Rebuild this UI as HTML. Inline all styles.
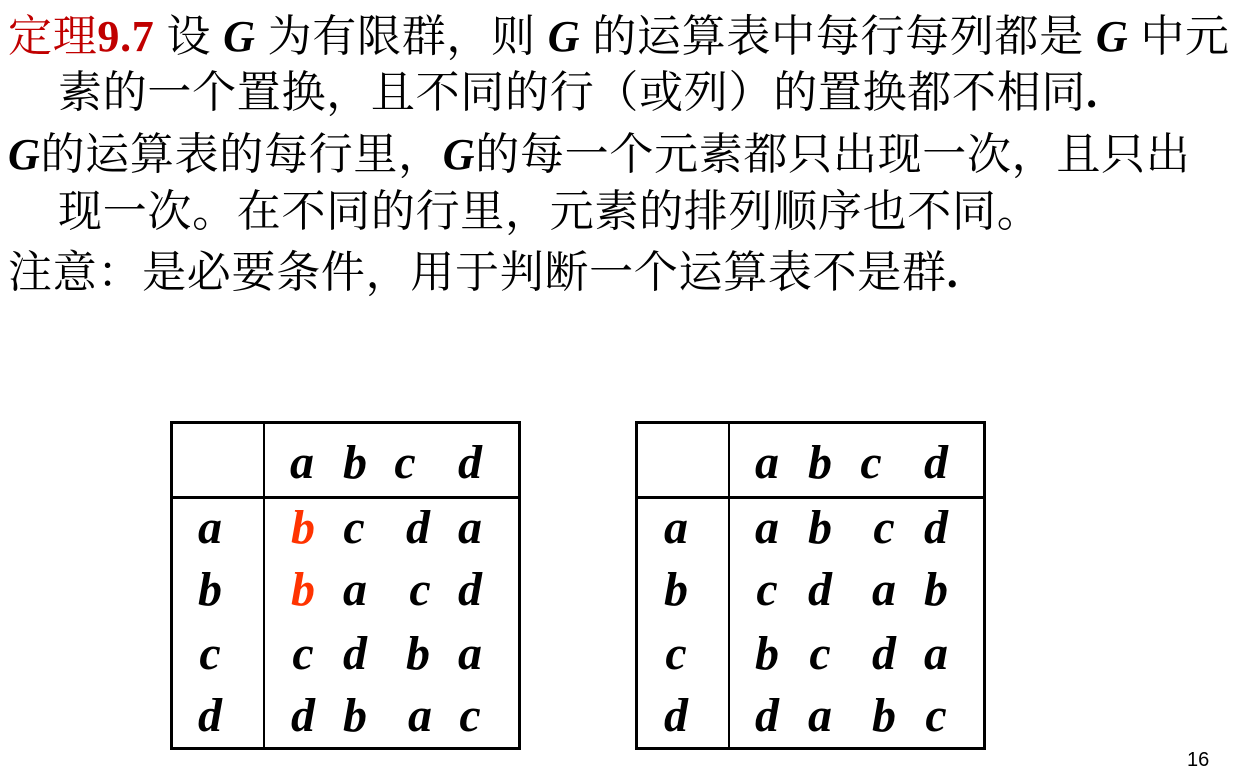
<!DOCTYPE html>
<html><head><meta charset="utf-8"><style>
body{margin:0;width:1260px;height:771px;background:#fff;position:relative;overflow:hidden;font-family:"Noto Serif CJK SC",serif;}
.l{position:absolute;left:8px;font-size:44px;line-height:44px;letter-spacing:0.7px;white-space:nowrap;color:#000;font-family:"Noto Serif CJK SC",serif;}
.i{font-weight:bold;font-style:italic;font-family:"Liberation Serif",serif;}
.n{font-family:"Liberation Serif",serif;font-weight:bold}
.r{color:#c00000}
.box{position:absolute;border:3px solid #000;box-sizing:border-box;}
.v{position:absolute;background:#000;}
.c{position:absolute;font:bold italic 48px "Liberation Serif",serif;transform:translate(-50%,-50%);line-height:1;}
.o{color:#ff3300}
</style></head><body>
<div class="l" style="top:10px"><span class="r">定理<span class="n">9.7</span></span> 设 <span class="i">G</span> 为有限群，则 <span class="i">G</span> 的运算表中每行每列都是 <span class="i">G</span> 中元</div>
<div class="l" style="top:66px;left:58px">素的一个置换，且不同的行（或列）的置换都不相同<span class="n">.</span></div>
<div class="l" style="top:128px"><span class="i">G</span>的运算表的每行里，<span class="i">G</span>的每一个元素都只出现一次，且只出</div>
<div class="l" style="top:185px;left:58px">现一次。在不同的行里，元素的排列顺序也不同。</div>
<div class="l" style="top:246px">注意：是必要条件，用于判断一个运算表不是群<span class="n">.</span></div>

<div class="box" style="left:170px;top:421px;width:351px;height:329px"></div>
<div class="v" style="left:263px;top:421px;width:2px;height:329px"></div>
<div class="v" style="left:170px;top:496px;width:351px;height:3px"></div>
<div class="box" style="left:635px;top:421px;width:351px;height:329px"></div>
<div class="v" style="left:728px;top:421px;width:2px;height:329px"></div>
<div class="v" style="left:635px;top:496px;width:351px;height:3px"></div>

<span class="c" style="left:302px;top:463px">a</span><span class="c" style="left:355px;top:463px">b</span><span class="c" style="left:405px;top:463px">c</span><span class="c" style="left:470px;top:463px">d</span>
<span class="c" style="left:210px;top:528px">a</span><span class="c" style="left:210px;top:590px">b</span><span class="c" style="left:210px;top:654px">c</span><span class="c" style="left:210px;top:716px">d</span>
<span class="c o" style="left:303px;top:528px">b</span><span class="c" style="left:354px;top:528px">c</span><span class="c" style="left:418px;top:528px">d</span><span class="c" style="left:470px;top:528px">a</span>
<span class="c o" style="left:303px;top:590px">b</span><span class="c" style="left:355px;top:590px">a</span><span class="c" style="left:420px;top:590px">c</span><span class="c" style="left:470px;top:590px">d</span>
<span class="c" style="left:303px;top:654px">c</span><span class="c" style="left:355px;top:654px">d</span><span class="c" style="left:418px;top:654px">b</span><span class="c" style="left:470px;top:654px">a</span>
<span class="c" style="left:303px;top:716px">d</span><span class="c" style="left:355px;top:716px">b</span><span class="c" style="left:420px;top:716px">a</span><span class="c" style="left:470px;top:716px">c</span>

<span class="c" style="left:767px;top:463px">a</span><span class="c" style="left:820px;top:463px">b</span><span class="c" style="left:871px;top:463px">c</span><span class="c" style="left:936px;top:463px">d</span>
<span class="c" style="left:676px;top:528px">a</span><span class="c" style="left:676px;top:590px">b</span><span class="c" style="left:676px;top:654px">c</span><span class="c" style="left:676px;top:716px">d</span>
<span class="c" style="left:767px;top:528px">a</span><span class="c" style="left:820px;top:528px">b</span><span class="c" style="left:884px;top:528px">c</span><span class="c" style="left:936px;top:528px">d</span>
<span class="c" style="left:767px;top:590px">c</span><span class="c" style="left:820px;top:590px">d</span><span class="c" style="left:884px;top:590px">a</span><span class="c" style="left:936px;top:590px">b</span>
<span class="c" style="left:767px;top:654px">b</span><span class="c" style="left:820px;top:654px">c</span><span class="c" style="left:884px;top:654px">d</span><span class="c" style="left:936px;top:654px">a</span>
<span class="c" style="left:767px;top:716px">d</span><span class="c" style="left:820px;top:716px">a</span><span class="c" style="left:884px;top:716px">b</span><span class="c" style="left:936px;top:716px">c</span>

<div style="position:absolute;left:1187px;top:749px;font:20px 'Liberation Sans',sans-serif">16</div>
</body></html>
